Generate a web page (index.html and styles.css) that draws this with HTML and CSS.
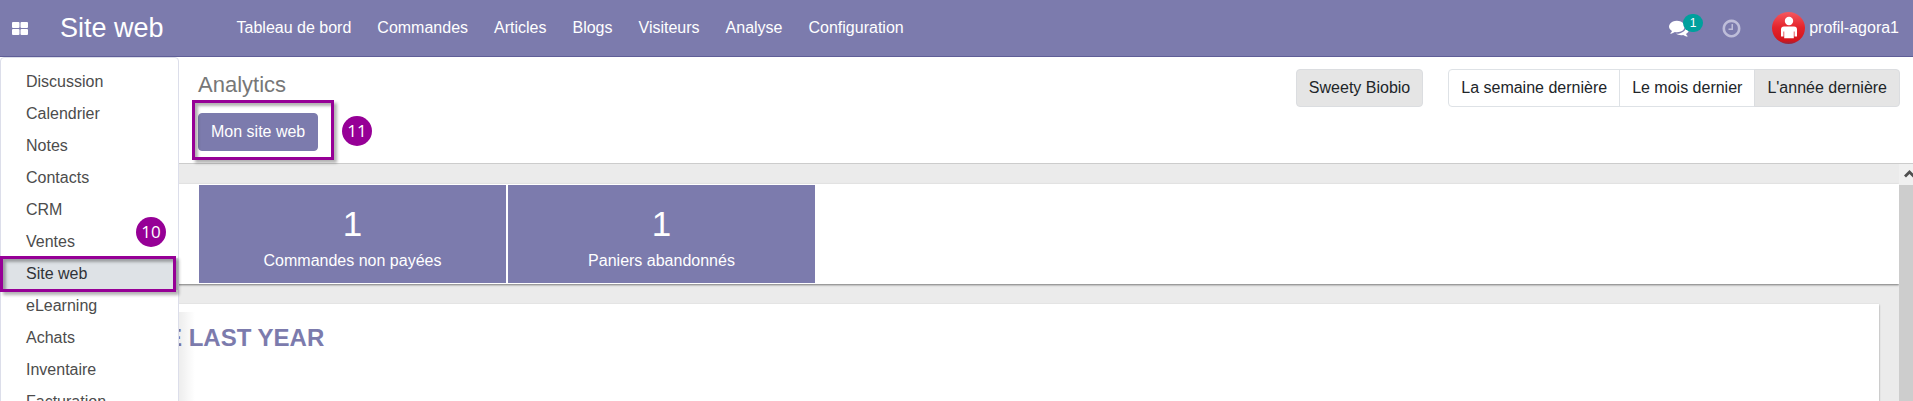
FILE: index.html
```
<!DOCTYPE html>
<html lang="fr">
  <head>
    <meta charset="UTF-8" />
    <meta name="viewport" content="width=device-width, initial-scale=1.0" />
    <title>Site web - Analytics</title>
    <link rel="stylesheet" href="styles.css">
  </head>

  <body>
    <header class="navbar">
      <button class="apps-toggle" type="button" aria-label="Applications">
        <svg width="16" height="13" viewBox="0 0 16 13" fill="#fff">
          <rect x="0" y="0" width="7.5" height="6" rx="1" />
          <rect x="8.5" y="0" width="7.5" height="6" rx="1" />
          <rect x="0" y="7" width="7.5" height="6" rx="1" />
          <rect x="8.5" y="7" width="7.5" height="6" rx="1" />
        </svg>
      </button>
      <a class="brand" href="#">Site web</a>
      <nav class="sections">
        <a href="#">Tableau de bord</a>
        <a href="#">Commandes</a>
        <a href="#">Articles</a>
        <a href="#">Blogs</a>
        <a href="#">Visiteurs</a>
        <a href="#">Analyse</a>
        <a href="#">Configuration</a>
      </nav>
      <div class="systray">
        <button class="messages" type="button" aria-label="Messages">
          <svg width="20" height="20" viewBox="0 0 1792 1792" fill="#fff">
            <path d="M1408 768q0 139-94 257t-256.5 186.5-353.5 68.5q-86 0-176-16-124 88-278 128-36 9-86 16h-3q-11 0-20.5-8t-11.5-21q-1-3-1-6.5t.5-6.5 2-6l2.5-5 3.5-5.5 4-5 4.5-5 4-4.5q5-6 23-25t26-29.5 22.5-29 25-38.5 20.5-44q-124-72-195-177t-71-224q0-139 94-257t256.5-186.5 353.5-68.5 353.5 68.5 256.5 186.5 94 257zm384 256q0 120-71 224.5t-195 176.5q10 24 20.5 44t25 38.5 22.5 29 26 29.5 23 25q1 1 4 4.5t4.5 5 4 5 3.5 5.5l2.5 5 2 6 .5 6.5-1 6.5q-3 14-13 22t-22 7q-50-7-86-16-154-40-278-128-90 16-176 16-271 0-472-132 58 4 88 4 161 0 309-45t264-129q125-92 192-212t67-254q0-77-23-152 129 71 204 178t75 230z" />
          </svg>
          <span class="badge">1</span>
        </button>
        <button class="activities" type="button" aria-label="Activités">
          <svg width="21" height="21" viewBox="0 0 1792 1792" fill="#bebdd9">
            <path d="M1024 544v448q0 14-9 23t-23 9h-320q-14 0-23-9t-9-23v-64q0-14 9-23t23-9h224v-352q0-14 9-23t23-9h64q14 0 23 9t9 23zm416 352q0-148-73-273t-198-198-273-73-273 73-198 198-73 273 73 273 198 198 273 73 273-73 198-198 73-273zm224 0q0 209-103 385.5t-279.5 279.5-385.5 103-385.5-103-279.5-279.5-103-385.5 103-385.5 279.5-279.5 385.5-103 385.5 103 279.5 279.5 103 385.5z" />
          </svg>
        </button>
        <a class="user" href="#">
          <svg width="33" height="32" viewBox="0 0 33 32">
            <defs>
              <linearGradient id="red" x1="0" y1="0" x2="0" y2="1">
                <stop offset="0" stop-color="#f4585f" />
                <stop offset="0.48" stop-color="#e5242b" />
                <stop offset="0.9" stop-color="#d3151c" />
                <stop offset="1" stop-color="#8e2a45" />
              </linearGradient>
            </defs>
            <ellipse cx="16.500" cy="16" rx="16.500" ry="16" fill="url(#red)" />
            <circle cx="17" cy="9" r="4.200" fill="#fff" />
            <path d="M12 14.500h10q3 0 3 3v7h-2.500v-5h-.7v6.800h-9.600v-6.800h-.7v5h-2.500v-7q0-3 3-3z" fill="#fff" />
          </svg>
          <span>profil-agora1</span>
        </a>
      </div>
    </header>

    <div class="app">
      <!-- Applications menu -->
      <nav class="app-menu">
        <a href="#">Discussion</a>
        <a href="#">Calendrier</a>
        <a href="#">Notes</a>
        <a href="#">Contacts</a>
        <a href="#">CRM</a>
        <a href="#">Ventes</a>
        <a class="active" href="#">Site web
          <span class="frame frame-menu"></span>
          <span class="step step-menu">10</span>
        </a>
        <a href="#">eLearning</a>
        <a href="#">Achats</a>
        <a href="#">Inventaire</a>
        <a href="#">Facturation</a>
      </nav>

      <section class="control-panel">
        <div>
          <h1>Analytics</h1>
          <div class="site-action">
            <button class="btn btn-primary" type="button">Mon site web</button>
            <span class="frame frame-action"></span>
            <span class="step step-action">11</span>
          </div>
        </div>
        <div class="filters">
          <button class="btn active" type="button">Sweety Biobio</button>
          <div class="btn-group">
            <button class="btn" type="button">La semaine dernière</button>
            <button class="btn" type="button">Le mois dernier</button>
            <button class="btn active" type="button">L'année dernière</button>
          </div>
        </div>
      </section>

      <div class="content">
        <main class="dashboard">
          <section class="tiles">
            <a class="tile" href="#">
              <span class="number">1</span>
              <span>Commandes non payées</span>
            </a>
            <a class="tile" href="#">
              <span class="number">1</span>
              <span>Paniers abandonnés</span>
            </a>
          </section>
          <section class="sales">
            <h2>E LAST YEAR</h2>
          </section>
        </main>
        <div class="scrollbar">
          <div class="scroll-up">
            <svg width="11" height="9" viewBox="0 0 11 9" fill="none" stroke="#505050" stroke-width="2.800">
              <path d="M1 7.500l4.500-4.500 4.500 4.500" />
            </svg>
          </div>
        </div>
      </div>
    </div>
  </body>
</html>
```
FILE: styles.css
```
* {
  padding: 0;
  margin: 0;
  box-sizing: border-box;
}

body {
  height: 100vh;
  display: flex;
  flex-direction: column;
  overflow: hidden;
  background-color: #ffffff;
  color: #212529;
  font-family: "Liberation Sans", Arial, sans-serif;
  font-size: 16px;
  line-height: 24px;
}

a {
  color: inherit;
  text-decoration: none;
}

button {
  font: inherit;
  color: inherit;
  background: none;
  border: none;
  cursor: pointer;
}

svg {
  display: block;
}

/* Top bar */
.navbar {
  flex: none;
  height: 57px;
  display: flex;
  align-items: center;
  padding: 0 14px 0 12px;
  background-color: #7c7bad;
  border-bottom: 1px solid #5f5e97;
  color: #ffffff;
}

.brand {
  margin-left: 32px;
  font-size: 27px;
}

.sections {
  display: flex;
  gap: 26px;
  margin-left: 73px;
}

.systray {
  display: flex;
  align-items: center;
  margin-left: auto;
}

.messages {
  position: relative;
}

.badge {
  position: absolute;
  left: 14px;
  top: -4px;
  width: 20px;
  height: 18px;
  border-radius: 9px;
  background-color: #00a09d;
  font-size: 12px;
  line-height: 18px;
}

.activities {
  margin-left: 32px;
}

.user {
  display: flex;
  align-items: center;
  gap: 4px;
  margin-left: 30px;
}

/* Everything below the bar */
.app {
  position: relative;
  flex: 1;
  min-height: 0;
  display: flex;
  flex-direction: column;
  overflow: hidden;
}

.app-menu {
  position: absolute;
  z-index: 2;
  top: 0;
  left: 0;
  width: 179px;
  padding: 8px 0;
  background-color: #ffffff;
  border: 1px solid #dcdeea;
  border-radius: 4px;
}

.app-menu:after {
  content: "";
  position: absolute;
  left: 178px;
  top: 254px;
  bottom: 0;
  width: 16px;
  background: linear-gradient(to right, rgba(0, 0, 0, 0.07), transparent);
}

.app-menu a {
  position: relative;
  display: block;
  padding: 4px 25px;
  color: #4c4c4c;
}

.app-menu a.active {
  background-color: #dee2e6;
  color: #303338;
}

/* Numbered steps */
.frame {
  position: absolute;
  border: 3px solid #960096;
  box-shadow: 3px 3px 3px rgba(0, 0, 0, 0.3),
    inset 3px 3px 3px rgba(0, 0, 0, 0.3);
  pointer-events: none;
}

.frame-menu {
  top: -2px;
  bottom: -2px;
  left: -1px;
  right: 2px;
}

.frame-action {
  top: -13px;
  bottom: -9px;
  left: -6px;
  right: -16px;
}

.step {
  position: absolute;
  width: 30px;
  height: 30px;
  border-radius: 50%;
  background-color: #960096;
  color: #ffffff;
  font-family: "Open Sans", sans-serif;
  font-size: 17px;
  line-height: 30px;
  text-align: center;
}

.step-menu {
  top: -41px;
  right: 12px;
}

.step-action {
  top: 3px;
  left: 144px;
}

/* Control panel */
.control-panel {
  display: flex;
  justify-content: space-between;
  align-items: flex-start;
  padding: 12px 13px 12px 198px;
  border-bottom: 1px solid #cccccc;
}

.control-panel h1 {
  margin: 2px 0 14px;
  color: #777777;
  font-size: 22px;
  font-weight: normal;
  line-height: 28px;
}

.site-action {
  position: relative;
  width: max-content;
}

.filters {
  display: flex;
  gap: 25px;
}

.btn {
  padding: 6px 12px;
  border: 1px solid #dee2e6;
  border-radius: 4px;
  white-space: nowrap;
}

.btn.active {
  background-color: #e5e5e5;
  border-color: #dbdde0;
}

.btn-primary {
  background-color: #7c7bad;
  border-color: #7c7bad;
  color: #ffffff;
}

.btn-group {
  display: flex;
}

.btn-group .btn {
  margin-left: -1px;
  border-radius: 0;
}

.btn-group .btn:first-child {
  margin-left: 0;
  border-radius: 4px 0 0 4px;
}

.btn-group .btn:last-child {
  border-radius: 0 4px 4px 0;
}

/* Dashboard */
.content {
  flex: 1;
  min-height: 0;
  display: flex;
}

.dashboard {
  flex: 1;
  display: flex;
  flex-direction: column;
  gap: 20px;
  padding-top: 20px;
  overflow: hidden;
  background-color: #ebebeb;
}

.tiles {
  display: grid;
  grid-template-columns: repeat(2, minmax(0, 307px));
  gap: 2px;
  padding: 1px 16px 1px 199px;
  background-color: #ffffff;
  box-shadow: 0 1px 2px rgba(0, 0, 0, 0.5);
}

.tile {
  display: flex;
  flex-direction: column;
  align-items: center;
  gap: 4px;
  padding: 18px 12px 10px;
  background-color: #7c7bad;
  color: #ffffff;
}

.number {
  font-size: 35px;
  line-height: 42px;
}

.sales {
  flex: 1;
  margin: 0 20px;
  padding: 20px 0 0 146px;
  background-color: #ffffff;
  box-shadow: 0 1px 2px rgba(0, 0, 0, 0.4);
}

.sales h2 {
  color: #7c7bad;
  font-size: 24px;
  line-height: 28px;
}

.scrollbar {
  width: 14px;
  background-color: #cdcdcd;
}

.scroll-up {
  height: 21px;
  padding: 5px 0 0 5px;
  overflow: hidden;
  background-color: #f0f0f0;
}
```
